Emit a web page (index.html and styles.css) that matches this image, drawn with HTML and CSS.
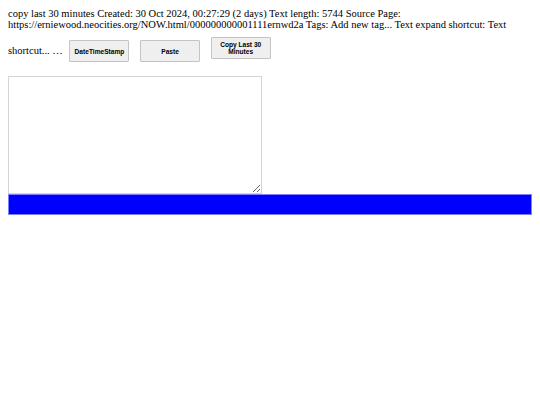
FILE: index.html
```html
<!DOCTYPE html>
<html>
<head>
<meta charset="utf-8">
<link rel="stylesheet" href="styles.css">
</head>
<body>
<div class="meta">copy last 30 minutes Created: 30 Oct 2024, 00:27:29 (2 days) Text length: 5744 Source Page: https://erniewood.neocities.org/NOW.html/000000000001111ernwd2a Tags: Add new tag... Text expand shortcut: Text shortcut... … <button class="btn">DateTimeStamp</button> <button class="btn">Paste</button> <button class="btn">Copy Last 30 Minutes</button></div>
<textarea class="area"></textarea>
<div class="bar"></div>
</body>
</html>
```
FILE: styles.css
```css
body {
  margin: 8px;
  font-family: "Liberation Serif", "Times New Roman", serif;
  font-size: 10.5px;
  color: #000;
  background: #fff;
}
.meta {
  margin-bottom: 14px;
}
.btn {
  font-family: "Liberation Sans", Arial, sans-serif;
  font-weight: bold;
  font-size: 6.6px;
  width: 60px;
  height: 22px;
  margin: 6.5px 4px 0;
  padding: 0 4px;
  background: #efefef;
  border: 1px solid #c4c4c4;
  border-radius: 1px;
  color: #000;
  vertical-align: baseline;
}
.area {
  display: block;
  width: 248px;
  height: 112px;
  margin: 0;
  padding: 2px;
  border: 1px solid #d4d4d4;
  resize: both;
}
.bar {
  height: 19px;
  background: #0000ff;
  border: 1px solid #8080ff;
}
```
